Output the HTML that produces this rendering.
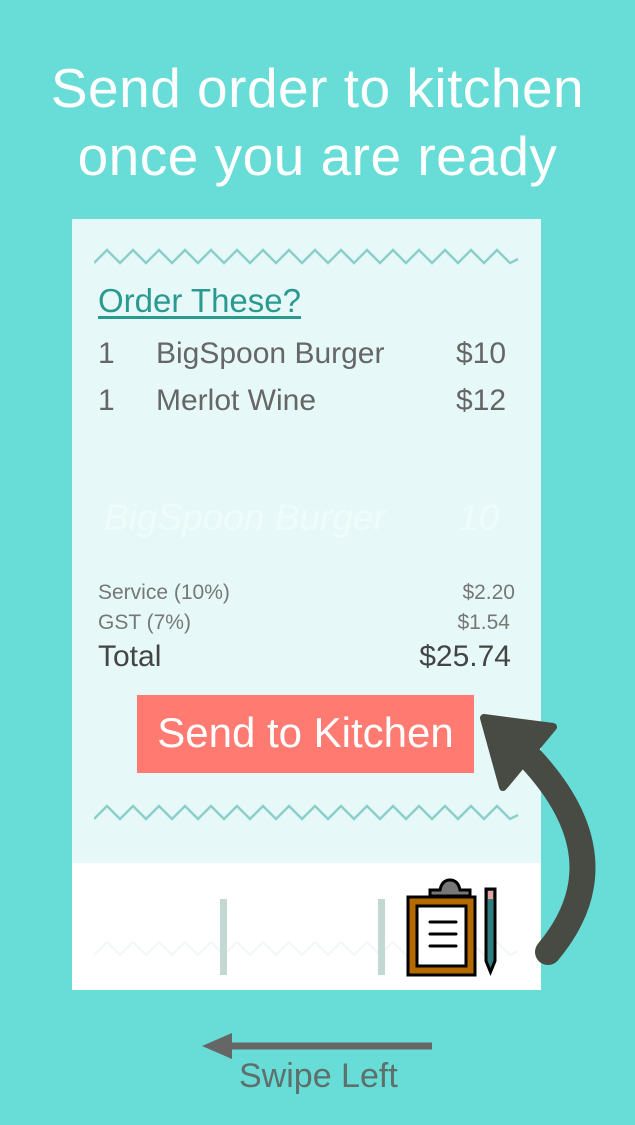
<!DOCTYPE html>
<html><head><meta charset="utf-8"><style>
*{margin:0;padding:0;box-sizing:border-box}
body{width:635px;height:1125px;background:#68dcd6;font-family:"Liberation Sans","DejaVu Sans",sans-serif;position:relative;overflow:hidden}
.t{position:absolute;left:0;width:635px;text-align:center;color:#fff;font-size:55px;letter-spacing:0.5px}
.card{position:absolute;left:72px;top:219px;width:469px;height:771px;background:#fff}
.top{position:absolute;left:0;top:0;width:469px;height:644px;background:#e6f9f8}
.a{position:absolute;white-space:nowrap}
</style></head><body>
<div class="t" style="top:56px">Send order to kitchen</div>
<div class="t" style="top:124px">once you are ready</div>
<div class="card">
 <div class="top"></div>
 <svg class="a" style="left:22px;top:26px" width="426" height="22"><polyline fill="none" stroke="#8ccfcb" stroke-width="2.5" points="0,18 13,5 26,18 39,5 52,18 65,5 78,18 91,5 104,18 117,5 130,18 143,5 156,18 169,5 182,18 195,5 208,18 221,5 234,18 247,5 260,18 273,5 286,18 299,5 312,18 325,5 338,18 351,5 364,18 377,5 390,18 403,5 416,18 424,14"/></svg>
 <div class="a" style="left:26px;top:63px;font-size:33px;color:#2a9a90;text-decoration:underline;text-underline-offset:4px">Order These?</div>
 <div class="a" style="left:26px;top:118px;font-size:30px;color:#666">1</div>
 <div class="a" style="left:84px;top:118px;font-size:30px;color:#666">BigSpoon Burger</div>
 <div class="a" style="left:384px;top:118px;font-size:30px;color:#666">$10</div>
 <div class="a" style="left:26px;top:165px;font-size:30px;color:#666">1</div>
 <div class="a" style="left:84px;top:165px;font-size:30px;color:#666">Merlot Wine</div>
 <div class="a" style="left:384px;top:165px;font-size:30px;color:#666">$12</div>
 <div class="a" style="left:32px;top:278px;font-size:37px;color:#eefcfb;font-style:italic">BigSpoon Burger</div>
 <div class="a" style="left:386px;top:278px;font-size:37px;color:#eefcfb;font-style:italic">10</div>
 <div class="a" style="left:26px;top:362px;font-size:21px;color:#777">Service (10%)</div>
 <div class="a" style="right:26px;top:362px;font-size:21px;color:#777">$2.20</div>
 <div class="a" style="left:26px;top:392px;font-size:21px;color:#777">GST (7%)</div>
 <div class="a" style="right:31px;top:392px;font-size:21px;color:#777">$1.54</div>
 <div class="a" style="left:26px;top:421px;font-size:30px;color:#444">Total</div>
 <div class="a" style="right:30px;top:421px;font-size:30px;color:#444">$25.74</div>
 <div class="a" style="left:65px;top:476px;width:337px;height:78px;background:#ff7b72;color:#fff;font-size:42px;text-align:center;line-height:76px">Send to Kitchen</div>
 <svg class="a" style="left:22px;top:582px" width="426" height="22"><polyline fill="none" stroke="#8ccfcb" stroke-width="2.5" points="0,18 13,5 26,18 39,5 52,18 65,5 78,18 91,5 104,18 117,5 130,18 143,5 156,18 169,5 182,18 195,5 208,18 221,5 234,18 247,5 260,18 273,5 286,18 299,5 312,18 325,5 338,18 351,5 364,18 377,5 390,18 403,5 416,18 424,14"/></svg>
 <svg class="a" style="left:22px;top:718px" width="426" height="22"><polyline fill="none" stroke="#f0f7f6" stroke-width="2" points="0,18 13,5 26,18 39,5 52,18 65,5 78,18 91,5 104,18 117,5 130,18 143,5 156,18 169,5 182,18 195,5 208,18 221,5 234,18 247,5 260,18 273,5 286,18 299,5 312,18 325,5 338,18 351,5 364,18 377,5 390,18 403,5 416,18 424,14"/></svg>
 <div class="a" style="left:148px;top:680px;width:7px;height:76px;background:#c3d8d2"></div>
 <div class="a" style="left:306px;top:680px;width:7px;height:76px;background:#c3d8d2"></div>
 <svg class="a" style="left:330px;top:655px" width="100" height="105">
  <path d="M28 22 L28 16 L38 16 Q40 6 48 6 Q56 6 58 16 L68 16 L68 22 Z" fill="#777" stroke="#000" stroke-width="3"/>
  <rect x="6" y="23" width="67" height="78" fill="#b56a00" stroke="#000" stroke-width="3"/>
  <rect x="15" y="32" width="49" height="60" fill="#fff" stroke="#000" stroke-width="3"/>
  <line x1="28" y1="48" x2="54" y2="48" stroke="#000" stroke-width="3" stroke-linecap="round"/>
  <line x1="28" y1="60" x2="54" y2="60" stroke="#000" stroke-width="3" stroke-linecap="round"/>
  <line x1="28" y1="72" x2="54" y2="72" stroke="#000" stroke-width="3" stroke-linecap="round"/>
  <path d="M84 15 L93 15 L93 87 L88.5 98 L84 87 Z" fill="#2e7f80" stroke="#000" stroke-width="3"/>
  <rect x="86" y="17" width="5" height="8" fill="#f1a0a0"/>
 </svg>
</div>
<svg class="a" style="left:0;top:0" width="635" height="1125">
 <path d="M548 952 Q625 860 530 758" fill="none" stroke="#474b43" stroke-width="26" stroke-linecap="round"/>
 <path d="M484 718 L553 727 L503 787 Z" fill="#474b43" stroke="#474b43" stroke-width="8" stroke-linejoin="round"/>
 <line x1="222" y1="1046" x2="432" y2="1046" stroke="#666" stroke-width="7"/>
 <path d="M202 1046 L232 1033 L232 1059 Z" fill="#666"/>
</svg>
<div class="a" style="left:239px;top:1057px;font-size:34px;color:#5f6f6c">Swipe Left</div>
</body></html>
